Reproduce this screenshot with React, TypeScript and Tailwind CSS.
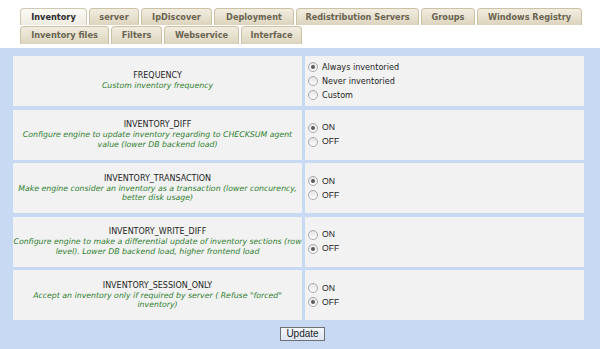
import React from 'react';

const tabRow1 = [
  { label: 'Inventory', w: 67, active: true },
  { label: 'server', w: 50 },
  { label: 'IpDiscover', w: 71 },
  { label: 'Deployment', w: 80 },
  { label: 'Redistribution Servers', w: 123 },
  { label: 'Groups', w: 54 },
  { label: 'Windows Registry', w: 105 },
];

const tabRow2 = [
  { label: 'Inventory files', w: 89 },
  { label: 'Filters', w: 51 },
  { label: 'Webservice', w: 75 },
  { label: 'Interface', w: 61 },
];

type Setting = {
  name: string;
  desc: string[];
  options: string[];
  checked: number;
};

const settings: Setting[] = [
  { name: 'FREQUENCY', desc: ['Custom inventory frequency'], options: ['Always inventoried', 'Never inventoried', 'Custom'], checked: 0 },
  { name: 'INVENTORY_DIFF', desc: ['Configure engine to update inventory regarding to CHECKSUM agent', 'value (lower DB backend load)'], options: ['ON', 'OFF'], checked: 0 },
  { name: 'INVENTORY_TRANSACTION', desc: ['Make engine consider an inventory as a transaction (lower concurency,', 'better disk usage)'], options: ['ON', 'OFF'], checked: 0 },
  { name: 'INVENTORY_WRITE_DIFF', desc: ['Configure engine to make a differential update of inventory sections (row', 'level). Lower DB backend load, higher frontend load'], options: ['ON', 'OFF'], checked: 1 },
  { name: 'INVENTORY_SESSION_ONLY', desc: ['Accept an inventory only if required by server ( Refuse "forced"', 'inventory)'], options: ['ON', 'OFF'], checked: 1 },
];

function Tab({ label, w, active }: { label: string; w: number; active?: boolean }) {
  return (
    <div
      style={{ width: w }}
      className={
        active
          ? 'h-full flex items-center justify-center rounded-t-[4px] border border-b-0 border-[#cfc8b2] bg-gradient-to-b from-[#fbfaf6] to-[#eeebe0] text-[#2a2a2a]'
          : 'h-full flex items-center justify-center rounded-t-[4px] border border-b-0 border-[#cbc2a6] bg-gradient-to-b from-[#f1ede0] to-[#dcd4bd] text-[#6b6552]'
      }
    >
      <span className="font-['DejaVu_Sans',sans-serif] font-bold text-[8.2px] leading-none whitespace-nowrap">{label}</span>
    </div>
  );
}

function Radio({ checked }: { checked: boolean }) {
  return (
    <span className="w-[10px] h-[10px] rounded-full border border-[#a9a9a9] bg-gradient-to-b from-[#e4e4e4] to-[#fdfdfd] flex items-center justify-center shrink-0">
      {checked && <span className="w-[4px] h-[4px] rounded-full bg-[#5a5a5a]" />}
    </span>
  );
}

export default function App() {
  return (
    <div className="w-[600px] h-[349px] bg-white flex flex-col overflow-hidden">
      {/* tabs */}
      <div className="pl-[20px] pt-[8px] h-[48px] flex flex-col gap-[1px]">
        <div className="flex gap-[2px] h-[17px]">
          {tabRow1.map((t) => (
            <Tab key={t.label} {...t} />
          ))}
        </div>
        <div className="flex gap-[2px] h-[18px]">
          {tabRow2.map((t) => (
            <Tab key={t.label} {...t} />
          ))}
        </div>
      </div>

      {/* settings */}
      <div className="flex-1 bg-[#c7d9f3] pt-[8px] pl-[13px] flex flex-col">
        <div className="grid grid-cols-[289px_279px] gap-x-[3px] gap-y-[3.5px]">
          {settings.map((s) => (
            <React.Fragment key={s.name}>
              <div className="h-[50px] bg-[#f2f2f2] flex flex-col items-center justify-center text-center">
                <div className="font-['DejaVu_Sans',sans-serif] text-[8px] leading-[10px] text-[#1e1e1e]">{s.name}</div>
                {s.desc.map((line) => (
                  <div key={line} className="font-['DejaVu_Sans',sans-serif] italic text-[7.8px] leading-[9.5px] text-[#2f7f2f] whitespace-nowrap">
                    {line}
                  </div>
                ))}
              </div>
              <div className="h-[50px] bg-[#f2f2f2] flex flex-col justify-center pl-[3px]">
                {s.options.map((o, i) => (
                  <label key={o} className="flex items-center gap-[4px] h-[14px]">
                    <Radio checked={i === s.checked} />
                    <span
                      className={
                        o === 'ON' || o === 'OFF'
                          ? "font-['Liberation_Sans',Arial,sans-serif] text-[8.6px] text-[#222]"
                          : "font-['DejaVu_Sans',sans-serif] text-[8.1px] text-[#222]"
                      }
                    >
                      {o}
                    </span>
                  </label>
                ))}
              </div>
            </React.Fragment>
          ))}
        </div>
        <div className="flex justify-center pr-[8px] mt-[7px]">
          <button className="w-[45px] h-[14px] border border-[#707070] bg-gradient-to-b from-[#f4f7fc] to-[#dde6f3] font-['Liberation_Sans',Arial,sans-serif] text-[10px] leading-none text-[#222] flex items-center justify-center">
            Update
          </button>
        </div>
      </div>
    </div>
  );
}
